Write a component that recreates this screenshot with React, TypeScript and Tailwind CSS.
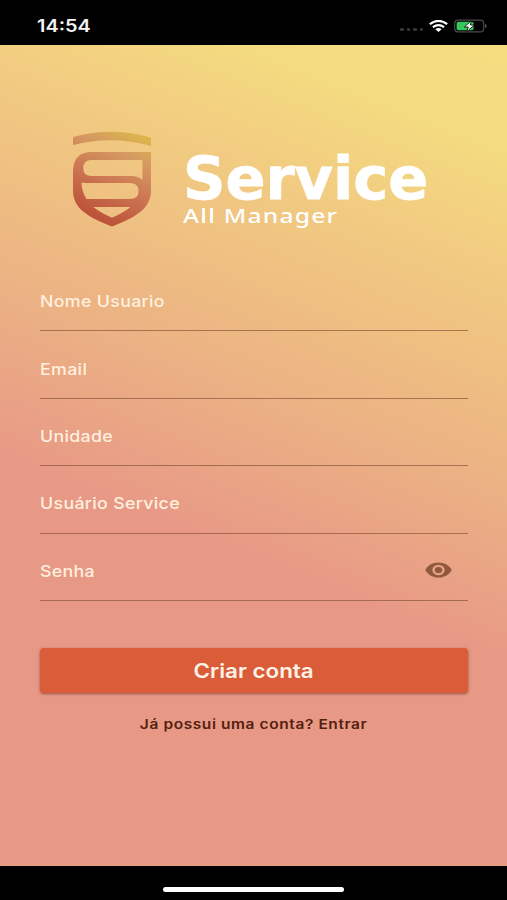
import { useState } from 'react';

interface FieldProps {
  label: string;
  type?: string;
  onToggle?: () => void;
}

const fields = ['Nome Usuario', 'Email', 'Unidade', 'Usuário Service'];

function StatusBar() {
  return (
    <div className="h-[44.5px] shrink-0 bg-black flex items-start justify-between pl-[37px] pr-5 pt-4">
      <span className="text-[17px] leading-5 font-semibold text-[#f4f4f4] origin-left scale-x-[1.17]">
        14:54
      </span>
      <div className="flex items-center h-5">
        <div className="flex gap-[3px] pt-[7px] mr-[6px]">
          <i className="w-[3.5px] h-[3px] rounded-[1px] bg-[#353535]" />
          <i className="w-[3.5px] h-[3px] rounded-[1px] bg-[#353535]" />
          <i className="w-[3.5px] h-[3px] rounded-[1px] bg-[#353535]" />
          <i className="w-[3.5px] h-[3px] rounded-[1px] bg-[#353535]" />
        </div>
        <svg width="19" height="12" viewBox="0 0 19 12" fill="none" stroke="#fff" strokeWidth="2.2" className="mr-[6px]">
          <path d="M0.8 4.2Q9.5 -2.4 18.2 4.2" />
          <path d="M3.9 7.2Q9.5 2.9 15.1 7.2" />
          <path d="M6.4 9.2Q9.5 6.9 12.6 9.2L9.5 12Z" fill="#fff" stroke="none" />
        </svg>
        <svg width="33" height="14" viewBox="0 0 33 14" fill="none">
          <rect x="0.7" y="1.2" width="29" height="11.6" rx="3.4" stroke="#4a4a4a" strokeWidth="1.2" />
          <rect x="2.6" y="2.8" width="17" height="8.4" rx="1.8" fill="#35c75a" />
          <path d="M31 5v4q1.700-.6 1.700-2T31 5Z" fill="#5a5a5a" />
          <path d="M17.500 1.500 10.300 8h4l-1.500 4.700L20.300 6h-4Z" fill="#fff" stroke="#000" strokeWidth="0.8" />
        </svg>
      </div>
    </div>
  );
}

function Logo() {
  return (
    <div className="flex items-start pl-[72px]">
      <svg width="80" height="97" viewBox="0 0 80 97" fill="url(#shield)" fillRule="evenodd">
        <defs>
          <linearGradient id="shield" x1="70" y1="6" x2="30" y2="88" gradientUnits="userSpaceOnUse">
            <stop offset="0" stopColor="#dcb44c" />
            <stop offset="0.25" stopColor="#d59a62" />
            <stop offset="0.6" stopColor="#cc7652" />
            <stop offset="1" stopColor="#bd533a" />
          </linearGradient>
        </defs>
        <path d="M1 6Q40-4.500 79 6.500V15Q40 4 1 14Z" />
        <path
          d="M79 21V59C79 78 64 86 40 95.500C16 86 1 78 1 59V41Q1 21 20 21Z
             M70.500 29H19.500Q11.300 29 11.300 37T19.500 45H60Q66 45 70.500 49Z
             M9.500 51.500Q9.500 60 14.500 68H58Q66.500 68 66.500 60T58 52H19Q13 52 9.500 51.500Z
             M21.300 76Q29 82 40 86.700Q51 82 58.500 76Z"
        />
      </svg>
      <div className="flex flex-col pl-[31px] pt-[20px] text-white">
        <span className="font-['DejaVu_Sans'] font-bold text-[59px] leading-[56px] origin-left [-webkit-text-stroke:0.8px_white]">
          Service
        </span>
        <span className="font-['Noto_Sans'] font-medium text-[20px] leading-[20px] -mt-px tracking-[1px] origin-left scale-x-[1.23] whitespace-nowrap">
          All Manager
        </span>
      </div>
    </div>
  );
}

function Field({ label, type = 'text', onToggle }: FieldProps) {
  return (
    <div className="relative h-[67.4px] flex items-center pt-[8px] border-b-[1.5px] border-[#814f35]/65">
      <input
        type={type}
        placeholder={label}
        className="w-[360px] bg-transparent outline-none text-[16px] font-medium tracking-[0.3px] text-[#fff0df] placeholder:text-[#fff0df] origin-left scale-x-[1.11]"
      />
      {onToggle && (
        <button
          type="button"
          onClick={onToggle}
          aria-label="Mostrar senha"
          className="absolute right-4 top-[28.5px]"
        >
          <svg width="27" height="16" viewBox="0 0 27 17" preserveAspectRatio="none">
            <path
              d="M13.500 0.500C7.400 0.500 2.300 3.700 0.300 8.500C2.300 13.300 7.400 16.500 13.500 16.500S24.700 13.300 26.700 8.500C24.700 3.700 19.600 0.500 13.500 0.500Z"
              fill="#90593f"
            />
            <ellipse cx="13.500" cy="8.500" rx="6.200" ry="5.500" fill="#e5a383" />
            <ellipse cx="13.500" cy="8.500" rx="3.700" ry="3.300" fill="#90593f" />
          </svg>
        </button>
      )}
    </div>
  );
}

export default function App() {
  const [showPassword, setShowPassword] = useState(false);

  return (
    <div className="w-[507px] h-[900px] flex flex-col overflow-hidden bg-black font-['Inter',sans-serif]">
      <StatusBar />
      <main className="h-[821.5px] shrink-0 pt-[86.5px] bg-[linear-gradient(202deg,#f4de80_0%,#f4db80_10%,#f2ce81_20%,#eebd82_34%,#ebae84_46%,#e89986_60%,#e89986_100%)]">
        <Logo />

        <form className="pl-10 pr-[39px] pt-[36px]" onSubmit={(e) => e.preventDefault()}>
          {fields.map((label) => (
            <Field key={label} label={label} />
          ))}
          <Field
            label="Senha"
            type={showPassword ? 'text' : 'password'}
            onToggle={() => setShowPassword(!showPassword)}
          />

          <button
            type="submit"
            className="mt-[47px] w-full h-[45px] pt-px rounded-[4px] bg-[#da5c39] shadow-[0_1px_3px_rgba(90,40,25,0.6)] text-[20px] font-semibold text-[#fff3e6] flex items-center justify-center"
          >
            <span className="scale-x-[1.12]">Criar conta</span>
          </button>
        </form>

        <p className="mt-[21px] flex justify-center text-[13px] leading-5 font-semibold tracking-[0.5px] text-[#54200f]">
          <span className="scale-x-[1.19]">Já possui uma conta? Entrar</span>
        </p>
      </main>
      <div className="flex-1 flex justify-center pt-[21px]">
        <div className="w-[181px] h-[5px] rounded-full bg-white" />
      </div>
    </div>
  );
}
